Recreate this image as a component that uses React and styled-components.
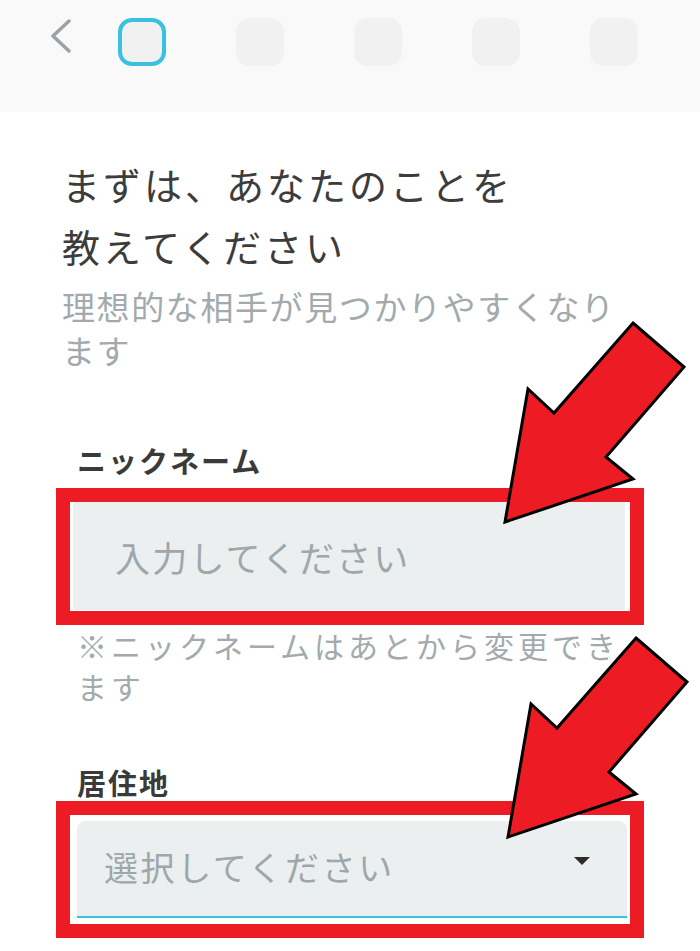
import styled, { createGlobalStyle } from "styled-components";

const GlobalStyle = createGlobalStyle`
  html, body {
    margin: 0;
    padding: 0;
    background: #ffffff;
  }
  body {
    font-family: "Noto Sans CJK JP", "Noto Sans", sans-serif;
  }
`;

const Page = styled.div`
  position: relative;
  width: 700px;
  height: 951px;
  overflow: hidden;
  background: #fff;
`;

const Header = styled.div`
  height: 112px;
  background: #f9f9f9;
  display: flex;
  align-items: flex-start;
  padding: 18px 0 0 50px;
  box-sizing: border-box;
`;

const Back = styled.div`
  width: 22px;
  height: 34px;
  margin-top: 1px;
  margin-right: 46px;
  display: flex;
`;

const Steps = styled.div`
  display: flex;
  gap: 70px;
`;

const Step = styled.div`
  width: 48px;
  height: 48px;
  box-sizing: border-box;
  border-radius: 14px;
  background: #f1f1f1;
  border: ${(p) => (p.$active ? "4px solid #3bc1e0" : "none")};
`;

const Content = styled.div`
  padding: 41px 0 0 62px;
`;

const Title = styled.h1`
  margin: 0;
  font-size: 38px;
  font-weight: 400;
  line-height: 62px;
  letter-spacing: 3px;
  color: #3c3c3c;
`;

const Lead = styled.p`
  margin: 7px 0 0;
  font-size: 33px;
  line-height: 44px;
  letter-spacing: 1.6px;
  color: #a2aaad;
`;

const Label = styled.div`
  margin: ${(p) => p.$top}px 0 0 15px;
  font-size: 29px;
  font-weight: 700;
  line-height: 40px;
  letter-spacing: 2px;
  color: #3a3a3a;
`;

const Highlight = styled.div`
  width: 588px;
  box-sizing: border-box;
  margin: ${(p) => p.$top}px 0 0 -6px;
  border: 14px solid #ed1c24;
  background: #fff;
  padding: ${(p) => p.$pad};
`;

const Input = styled.div`
  height: 108px;
  background: #eceff0;
  display: flex;
  align-items: center;
  padding-left: 42px;
  font-size: 35px;
  letter-spacing: 2.2px;
  color: #9ea7aa;
`;

const Select = styled.div`
  height: 97px;
  box-sizing: border-box;
  background: #eceff0;
  border-radius: 8px 8px 0 0;
  border-bottom: 2px solid #3bc1e0;
  display: flex;
  align-items: center;
  justify-content: space-between;
  padding: 0 37px 4px 27px;
  font-size: 34px;
  letter-spacing: 2.6px;
  color: #9ea7aa;
`;

const Caret = styled.span`
  width: 0;
  height: 0;
  margin-bottom: 12px;
  border-left: 8px solid transparent;
  border-right: 8px solid transparent;
  border-top: 8px solid #2e2a2a;
`;

const Hint = styled.p`
  margin: 0 0 0 15px;
  font-size: 30px;
  line-height: 41px;
  letter-spacing: 4px;
  color: #a2aaad;
`;

const Overlay = styled.svg`
  position: absolute;
  left: 0;
  top: 0;
  pointer-events: none;
`;

const arrow = (dx, dy) =>
  [
    [633, 323],
    [684, 367],
    [606, 457],
    [633, 479],
    [505, 522],
    [528, 389],
    [554, 413],
  ]
    .map(([x, y]) => `${x + dx},${y + dy}`)
    .join(" ");

export default function App() {
  return (
    <Page>
      <GlobalStyle />
      <Header>
        <Back>
          <svg width="22" height="34" viewBox="0 0 22 34">
            <polyline
              points="19,2 3,17 19,32"
              fill="none"
              stroke="#9aa3a6"
              strokeWidth="3.5"
              strokeLinecap="round"
              strokeLinejoin="round"
            />
          </svg>
        </Back>
        <Steps>
          <Step $active />
          <Step />
          <Step />
          <Step />
          <Step />
        </Steps>
      </Header>

      <Content>
        <Title>
          まずは、あなたのことを
          <br />
          教えてください
        </Title>
        <Lead>
          理想的な相手が見つかりやすくなり
          <br />
          ます
        </Lead>

        <Label $top={68}>ニックネーム</Label>
        <Highlight $top={8} $pad="0 5px 1px 3px">
          <Input>入力してください</Input>
        </Highlight>
        <Hint>
          ※ニックネームはあとから変更でき
          <br />
          ます
        </Hint>

        <Label $top={55}>居住地</Label>
        <Highlight $top={-1} $pad="6px 3px 6px 7px">
          <Select>
            <span>選択してください</span>
            <Caret />
          </Select>
        </Highlight>
      </Content>

      <Overlay width="700" height="951" viewBox="0 0 700 951">
        <polygon points={arrow(0, 0)} fill="#ed1c24" stroke="#000" strokeWidth="3" strokeLinejoin="miter" />
        <polygon points={arrow(3, 315)} fill="#ed1c24" stroke="#000" strokeWidth="3" strokeLinejoin="miter" />
      </Overlay>
    </Page>
  );
}
